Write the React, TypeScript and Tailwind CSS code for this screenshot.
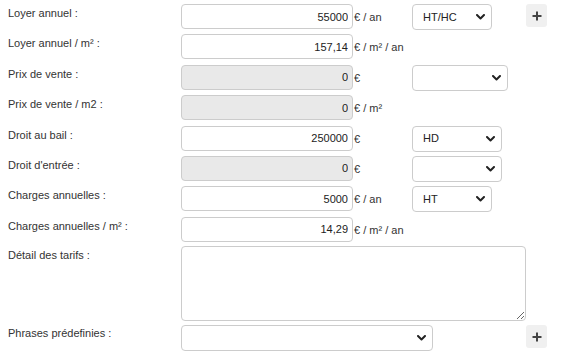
import React from 'react';

type Row = {
  label: string;
  value: string;
  unit: string;
  disabled?: boolean;
  select?: { value: string; width: string };
  plus?: boolean;
  height: string;
};

const rows: Row[] = [
  { label: 'Loyer annuel :', value: '55000', unit: '€ / an', select: { value: 'HT/HC', width: 'w-[80px]' }, plus: true, height: 'h-[30.4px]' },
  { label: 'Loyer annuel / m² :', value: '157,14', unit: '€ / m² / an', height: 'h-[30.4px]' },
  { label: 'Prix de vente :', value: '0', unit: '€', disabled: true, select: { value: '', width: 'w-[96px]' }, height: 'h-[30.4px]' },
  { label: 'Prix de vente / m2 :', value: '0', unit: '€ / m²', disabled: true, height: 'h-[30.4px]' },
  { label: 'Droit au bail :', value: '250000', unit: '€', select: { value: 'HD', width: 'w-[90px]' }, height: 'h-[30.4px]' },
  { label: "Droit d'entrée :", value: '0', unit: '€', disabled: true, select: { value: '', width: 'w-[90px]' }, height: 'h-[30.4px]' },
  { label: 'Charges annuelles :', value: '5000', unit: '€ / an', select: { value: 'HT', width: 'w-[80px]' }, height: 'h-[30.4px]' },
  { label: 'Charges annuelles / m² :', value: '14,29', unit: '€ / m² / an', height: 'h-[29.3px]' },
];

const Chevron = () => (
  <svg
    width="9"
    height="6"
    viewBox="0 0 9 6"
    className="pointer-events-none absolute right-[7px] top-1/2 -translate-y-1/2"
  >
    <polyline points="1,1 4.5,4.5 8,1" fill="none" stroke="#222" strokeWidth="2" strokeLinecap="round" strokeLinejoin="round" />
  </svg>
);

const FakeSelect = ({ value, width }: { value: string; width: string }) => (
  <div className={`relative h-[26px] ${width}`}>
    <select
      defaultValue={value}
      className="h-full w-full appearance-none rounded-[4px] border border-[#cccccc] bg-white pl-[10px] text-[11px] text-[#222] outline-none"
    >
      <option value={value}>{value}</option>
    </select>
    <Chevron />
  </div>
);

const PlusButton = () => (
  <button className="flex h-[23px] w-[21px] items-center justify-center rounded-[3px] bg-[#f0f0f0]">
    <svg width="10" height="10" viewBox="0 0 10 10">
      <path d="M5 0.5v9M0.5 5h9" stroke="#444" strokeWidth="2" />
    </svg>
  </button>
);

export default function App() {
  return (
    <div className="h-[359px] w-[561px] bg-white pt-[4px] font-['Liberation_Sans',Arial,sans-serif] text-[11px] text-[#333]">
      {rows.map((row) => (
        <div key={row.label} className={`flex items-start ${row.height}`}>
          <div className="w-[181px] pl-2 pt-[3px] leading-[normal]">{row.label}</div>
          <input
            readOnly
            disabled={row.disabled}
            value={row.value}
            className={`h-[25px] w-[172px] rounded-[4px] border border-[#cccccc] pr-[4px] text-right text-[11px] text-[#222] outline-none ${
              row.disabled ? 'bg-[#e9e9e9]' : 'bg-white'
            }`}
          />
          <span className="w-[59px] pl-[1px] pt-[7px] leading-[normal]">{row.unit}</span>
          <div className="w-[114px]">
            {row.select && <FakeSelect value={row.select.value} width={row.select.width} />}
          </div>
          {row.plus && <PlusButton />}
        </div>
      ))}

      <div className="flex h-[79px] items-start">
        <div className="w-[181px] pl-2 pt-[3px] leading-[normal]">Détail des tarifs :</div>
        <textarea className="h-[75px] w-[345px] rounded-[4px] border border-[#cccccc] bg-white text-[11px] outline-none" />
      </div>

      <div className="flex items-start">
        <div className="w-[181px] pl-2 pt-[2px] leading-[normal]">Phrases prédefinies :</div>
        <div className="w-[345px]">
          <FakeSelect value="" width="w-[252px]" />
        </div>
        <PlusButton />
      </div>
    </div>
  );
}
